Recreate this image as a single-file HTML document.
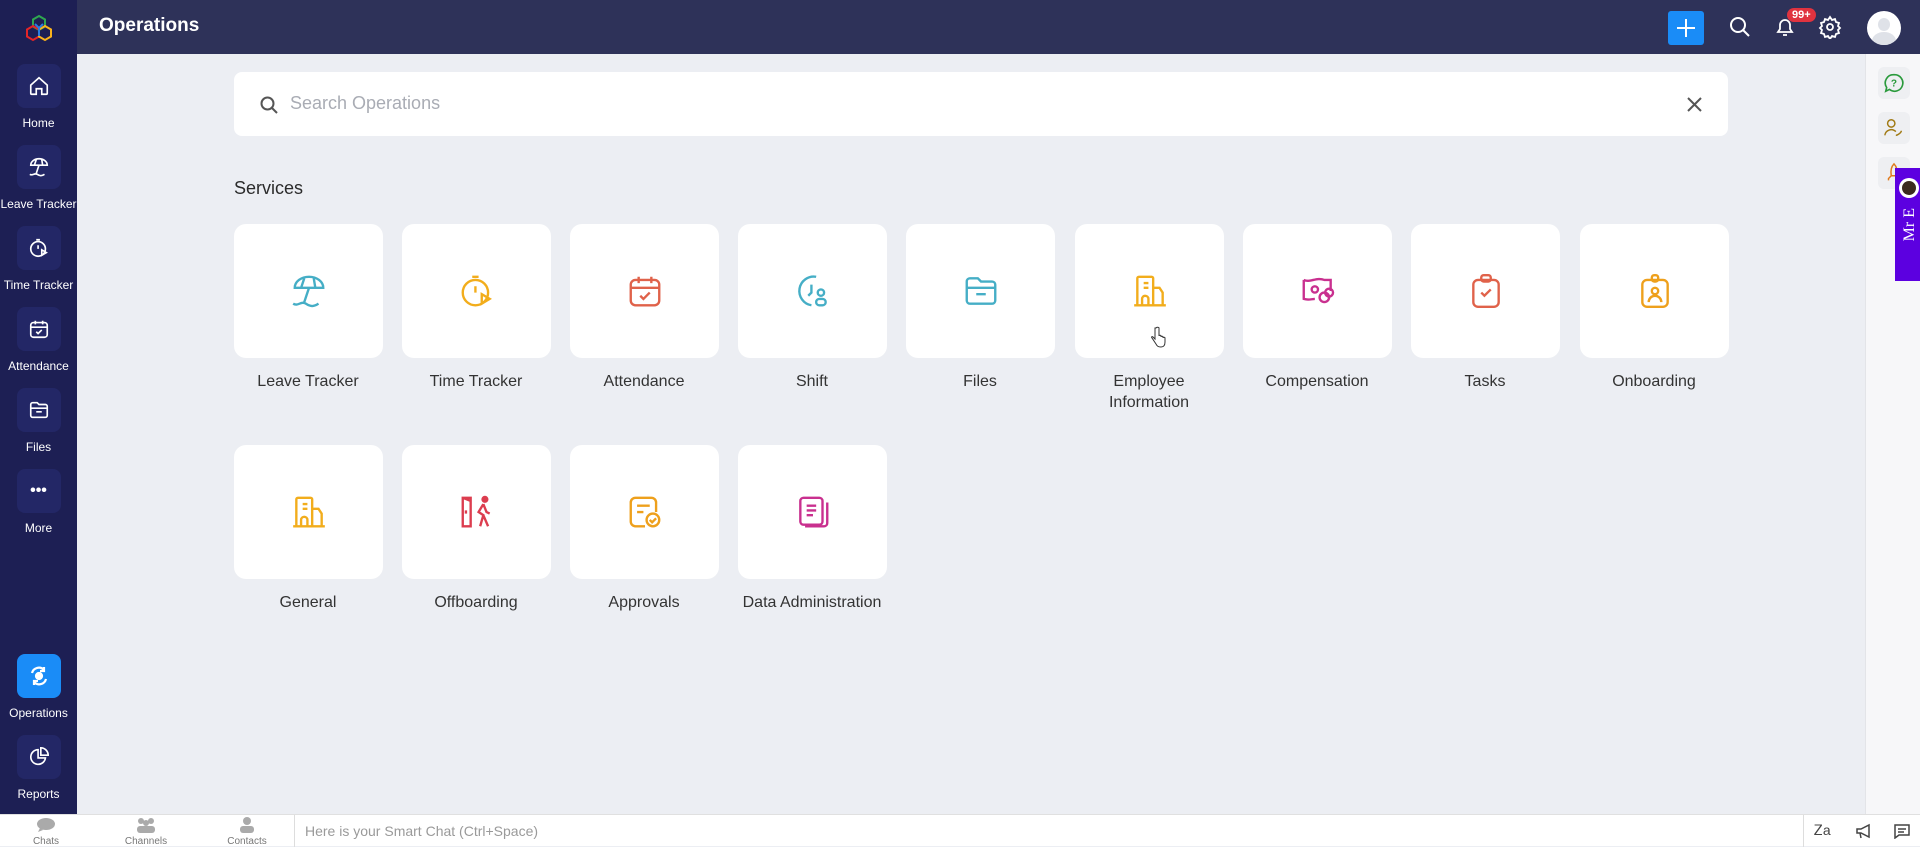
<!DOCTYPE html>
<html><head><meta charset="utf-8"><style>
*{margin:0;padding:0;box-sizing:border-box}
body{width:1920px;height:846px;overflow:hidden;background:#eceef3;font-family:"Liberation Sans",sans-serif;position:relative}
.side{position:absolute;left:0;top:0;width:77px;height:814px;background:#1d1f54}
.top{position:absolute;left:77px;top:0;right:0;height:54px;background:#2e3259}
.top h1{position:absolute;left:22px;top:15px;color:#fff;font-size:19px;font-weight:bold}
.nav{position:absolute;left:0;width:77px;text-align:center;color:#fff;font-size:12px}
.nav .b{width:44px;height:44px;margin:0 auto 8px;border-radius:8px;background:#232766;display:flex;align-items:center;justify-content:center}
.nav.act .b{background:#1a8cf7}
.search{position:absolute;left:234px;top:72px;width:1494px;height:64px;background:#fff;border-radius:8px}
.search span{position:absolute;left:56px;top:21px;font-size:18px;color:#a9acb4}
.svc{position:absolute;left:234px;top:178px;font-size:18px;color:#2b2b2b}
.card{position:absolute;width:149px;height:134px;background:#fff;border-radius:12px;display:flex;align-items:center;justify-content:center}
.lbl{position:absolute;width:168px;text-align:center;font-size:16px;color:#333;line-height:21px}
.rp{position:absolute;left:1865px;top:54px;width:55px;height:760px;background:#f7f7f9;border-left:1px solid #e3e4e8}
.rb{position:absolute;left:1878px;width:32px;height:32px;border-radius:6px;background:#eeeff2;display:flex;align-items:center;justify-content:center}
.bot{position:absolute;left:0;top:814px;width:1920px;height:32px;background:#fff;border-top:1px solid #e0e0e0}
.bi{position:absolute;top:2px;text-align:center;font-size:10px;color:#777;width:60px}
</style></head><body>
<div class="side">
 <svg style="position:absolute;left:25px;top:14px" width="28" height="28" viewBox="0 0 28 28"><path d="M14 2l6 3.5v7L14 16l-6-3.5v-7z" fill="none" stroke="#2fa84f" stroke-width="2"/><path d="M8 12l6 3.5v7L8 26l-6-3.5v-7z" fill="none" stroke="#e42527" stroke-width="2"/><path d="M20 12l6 3.5v7L20 26l-6-3.5v-7z" fill="none" stroke="#f9b21d" stroke-width="2"/><path d="M10 10l4 4 4-4M14 14v8" stroke="#2a7de1" stroke-width="2" fill="none"/></svg>
</div>
<div class="nav" style="top:64px"><div class="b"><svg width="22" height="22" viewBox="0 0 24 24" fill="none" stroke="#fff" stroke-width="1.8"><path d="M3 11l9-8 9 8v9a1 1 0 01-1 1h-5v-6h-6v6H4a1 1 0 01-1-1z"/></svg></div>Home</div>
<div class="nav" style="top:145px"><div class="b"><svg width="22" height="22" viewBox="0 0 24 24" fill="none" stroke="#fff" stroke-width="1.8"><path d="M3 10a9 7 0 0118 0zM12 10l-3 9M7 10l2-6M15 4l1 6M2 20c3 2 5-2 8 0s5 2 8 0"/></svg></div>Leave Tracker</div>
<div class="nav" style="top:226px"><div class="b"><svg width="22" height="22" viewBox="0 0 24 24" fill="none" stroke="#fff" stroke-width="1.8"><circle cx="11" cy="13" r="8"/><path d="M9 3h4M11 9v4M15 14l5 3-5 3z"/></svg></div>Time Tracker</div>
<div class="nav" style="top:307px"><div class="b"><svg width="22" height="22" viewBox="0 0 24 24" fill="none" stroke="#fff" stroke-width="1.8"><rect x="3" y="5" width="18" height="16" rx="3"/><path d="M3 10h18M8 3v4M16 3v4M9 15l2 2 4-4"/></svg></div>Attendance</div>
<div class="nav" style="top:388px"><div class="b"><svg width="22" height="22" viewBox="0 0 24 24" fill="none" stroke="#fff" stroke-width="1.8"><path d="M3 6a2 2 0 012-2h5l2 2h7a2 2 0 012 2v10a2 2 0 01-2 2H5a2 2 0 01-2-2z M3 10h18M9 14h6"/></svg></div>Files</div>
<div class="nav" style="top:469px"><div class="b" style="font-size:16px;font-weight:bold">•••</div>More</div>
<div class="nav act" style="top:654px"><div class="b"><svg width="24" height="24" viewBox="0 0 24 24" fill="none" stroke="#fff" stroke-width="2.2"><path d="M5 9a7 7 0 0112-3M19 15a7 7 0 01-12 3M17 3v4h-4M7 21v-4h4"/><circle cx="12" cy="12" r="3" fill="#fff"/></svg></div>Operations</div>
<div class="nav" style="top:735px"><div class="b"><svg width="22" height="22" viewBox="0 0 24 24" fill="none" stroke="#fff" stroke-width="1.8"><path d="M11 4a8 8 0 108 9h-8z M14 2v8h8a8 8 0 00-8-8z"/></svg></div>Reports</div>
<div class="top"><h1>Operations</h1>
 <div style="position:absolute;left:1591px;top:11px;width:36px;height:34px;background:#1a8cf7;border-radius:3px"><svg width="36" height="34"><path d="M18 8v18M9 17h18" stroke="#fff" stroke-width="2"/></svg></div>
 <svg style="position:absolute;left:1652px;top:16px" width="22" height="22" fill="none" stroke="#fff" stroke-width="2"><circle cx="9" cy="9" r="7"/><path d="M14 14l6 6"/></svg>
 <svg style="position:absolute;left:1697px;top:16px" width="22" height="22" fill="none" stroke="#fff" stroke-width="1.8"><path d="M4 16h14l-2-3V9a5 5 0 00-10 0v4zM9 19h4"/></svg>
 <div style="position:absolute;left:1710px;top:8px;background:#e0333f;color:#fff;font-size:11px;font-weight:bold;border-radius:8px;padding:1px 5px">99+</div>
 <svg style="position:absolute;left:1741px;top:15px" width="24" height="24" viewBox="0 0 24 24" fill="none" stroke="#fff" stroke-width="1.8"><circle cx="12" cy="12" r="3"/><path d="M12 2l2 3 3-1 1 3 3 1-1 3 2 2-2 2 1 3-3 1-1 3-3-1-2 3-2-3-3 1-1-3-3-1 1-3-2-2 2-2-1-3 3-1 1-3 3 1z"/></svg>
 <div style="position:absolute;left:1790px;top:11px;width:34px;height:34px;border-radius:50%;background:#fff;overflow:hidden"><div style="position:absolute;left:11px;top:7px;width:12px;height:13px;border-radius:50%;background:#dfe2e8"></div><div style="position:absolute;left:5px;top:21px;width:24px;height:18px;border-radius:50%;background:#dfe2e8"></div></div>
</div>
<div class="search"><svg style="position:absolute;left:26px;top:24px" width="18" height="18" fill="none" stroke="#555" stroke-width="2"><circle cx="7.5" cy="7.5" r="6"/><path d="M12 12l5 5"/></svg><span>Search Operations</span>
<svg style="position:absolute;left:1453px;top:25px" width="15" height="15" stroke="#555" stroke-width="2"><path d="M1 1l13 13M14 1L1 14"/></svg></div>
<div class="svc">Services</div>

<div class="card" style="left:234px;top:224px"><svg width="38" height="38" viewBox="0 0 24 24" fill="none" stroke="#45aec6" stroke-width="1.5"><path d="M3 10a9 7 0 0118 0zM12 10l-3 9M7 10l2-6M15 4l1 6M2 20c3 2 5-2 8 0s5 2 8 0"/></svg></div>
<div class="card" style="left:402px;top:224px"><svg width="38" height="38" viewBox="0 0 24 24" fill="none" stroke="#f2ad1c" stroke-width="1.5"><circle cx="11" cy="13" r="8"/><path d="M9 3h4M11 9v4M15 14l5 3-5 3z"/></svg></div>
<div class="card" style="left:570px;top:224px"><svg width="38" height="38" viewBox="0 0 24 24" fill="none" stroke="#e0624a" stroke-width="1.5"><rect x="3" y="5" width="18" height="16" rx="3"/><path d="M3 10h18M8 3v4M16 3v4M9 15l2 2 4-4"/></svg></div>
<div class="card" style="left:738px;top:224px"><svg width="38" height="38" viewBox="0 0 24 24" fill="none" stroke="#45aec6" stroke-width="1.5"><path d="M14 3a9 9 0 10-3 18M11 8v5l-2 2"/><circle cx="17" cy="13" r="2"/><rect x="14" y="17" width="6" height="4" rx="2"/></svg></div>
<div class="card" style="left:906px;top:224px"><svg width="38" height="38" viewBox="0 0 24 24" fill="none" stroke="#45aec6" stroke-width="1.5"><path d="M3 6a2 2 0 012-2h5l2 2h7a2 2 0 012 2v10a2 2 0 01-2 2H5a2 2 0 01-2-2z M3 10h18M9 14h6"/></svg></div>
<div class="card" style="left:1075px;top:224px"><svg width="38" height="38" viewBox="0 0 24 24" fill="none" stroke="#f2ad1c" stroke-width="1.5"><path d="M4 21V4a1 1 0 011-1h8a1 1 0 011 1v17M14 10h4l2 3v8M2 21h20M8 7h3M8 10h3M7 21v-4a2 2 0 014 0v4"/></svg></div>
<div class="card" style="left:1243px;top:224px"><svg width="38" height="38" viewBox="0 0 24 24" fill="none" stroke="#c9308f" stroke-width="1.5"><path d="M3 5c4 2 8-2 13 0l4 0v7M3 5v12c3 1 5 0 7 0"/><circle cx="10" cy="11" r="2"/><circle cx="16" cy="16" r="3"/><circle cx="19" cy="13" r="2.5"/></svg></div>
<div class="card" style="left:1411px;top:224px"><svg width="38" height="38" viewBox="0 0 24 24" fill="none" stroke="#e0624a" stroke-width="1.5"><rect x="4" y="5" width="16" height="17" rx="3"/><rect x="9" y="2" width="6" height="4" rx="1.5"/><path d="M9 13l2 2 4-4"/></svg></div>
<div class="card" style="left:1580px;top:224px"><svg width="38" height="38" viewBox="0 0 24 24" fill="none" stroke="#eea01c" stroke-width="1.5"><rect x="4" y="5" width="16" height="17" rx="3"/><rect x="10" y="2" width="4" height="4" rx="1.5"/><circle cx="12" cy="12" r="2"/><path d="M8 19a4 4 0 018 0"/></svg></div>

<div class="lbl" style="left:224px;top:371px">Leave Tracker</div>
<div class="lbl" style="left:392px;top:371px">Time Tracker</div>
<div class="lbl" style="left:560px;top:371px">Attendance</div>
<div class="lbl" style="left:728px;top:371px">Shift</div>
<div class="lbl" style="left:896px;top:371px">Files</div>
<div class="lbl" style="left:1065px;top:371px">Employee<br>Information</div>
<div class="lbl" style="left:1233px;top:371px">Compensation</div>
<div class="lbl" style="left:1401px;top:371px">Tasks</div>
<div class="lbl" style="left:1570px;top:371px">Onboarding</div>

<div class="card" style="left:234px;top:445px"><svg width="38" height="38" viewBox="0 0 24 24" fill="none" stroke="#f2ad1c" stroke-width="1.5"><path d="M4 21V4a1 1 0 011-1h8a1 1 0 011 1v17M14 10h4l2 3v8M2 21h20M8 7h3M8 10h3M7 21v-4a2 2 0 014 0v4"/></svg></div>
<div class="card" style="left:402px;top:445px"><svg width="38" height="38" viewBox="0 0 24 24" fill="none" stroke="#dc3d4f" stroke-width="1.5"><path d="M3 3h5v18H3zM3 3l5 2M5 11v2"/><circle cx="17" cy="4" r="1.5" fill="#dc3d4f"/><path d="M16 7l-3 5 3 2-2 7M16 7l2 5 2 1M16 14l3 7"/></svg></div>
<div class="card" style="left:570px;top:445px"><svg width="38" height="38" viewBox="0 0 24 24" fill="none" stroke="#eea01c" stroke-width="1.5"><path d="M12 21H6a3 3 0 01-3-3V6a3 3 0 013-3h10a3 3 0 013 3v6M7 8h8M7 12h4"/><circle cx="17" cy="17" r="4"/><path d="M15 17l1.5 1.5 2.5-2.5"/></svg></div>
<div class="card" style="left:738px;top:445px"><svg width="38" height="38" viewBox="0 0 24 24" fill="none" stroke="#c9308f" stroke-width="1.5"><rect x="4" y="3" width="14" height="17" rx="2"/><path d="M7 21h12a2 2 0 002-2V6M8 8h6M8 11h6M8 14h4"/></svg></div>

<div class="lbl" style="left:224px;top:592px">General</div>
<div class="lbl" style="left:392px;top:592px">Offboarding</div>
<div class="lbl" style="left:560px;top:592px">Approvals</div>
<div class="lbl" style="left:728px;top:592px">Data Administration</div>

<svg style="position:absolute;left:1150px;top:326px" width="16" height="22" viewBox="0 0 16 22" fill="#fff" stroke="#333" stroke-width="1"><path d="M5 2v11l-2-2c-1-1-2 0-1 1l4 6c1 2 2 3 5 3s4-2 4-5v-4c0-1-2-1-2 0v-1c0-1-2-1-2 0v-1c0-1-2-1-2 0V2c0-1-3-1-3 0z"/></svg>

<div class="rp"></div>
<div class="rb" style="top:67px"><svg width="22" height="22" viewBox="0 0 24 24" fill="none" stroke="#2a9a3c" stroke-width="1.8"><path d="M12 3a9 9 0 11-5 16l-4 2 1-4a9 9 0 018-14z"/><text x="12" y="16" font-size="11" font-weight="bold" fill="#2a9a3c" stroke="none" text-anchor="middle" font-family="Liberation Sans">?</text></svg></div>
<div class="rb" style="top:112px"><svg width="22" height="22" viewBox="0 0 24 24" fill="none" stroke="#a17a14" stroke-width="1.6"><circle cx="9" cy="7" r="4"/><path d="M2 20a7 7 0 0112-4M14 20c2 0 6-3 6-5"/></svg></div>
<div class="rb" style="top:157px"><svg width="22" height="22" viewBox="0 0 24 24" fill="none" stroke="#e07a1c" stroke-width="1.6"><path d="M12 2c3 3 4 7 3 13H9C8 9 9 5 12 2zM9 15l-3 3v2M15 15l3 3v2"/></svg></div>
<div style="position:absolute;left:1895px;top:168px;width:25px;height:113px;background:#5c00e0"><div style="position:absolute;left:4px;top:10px;width:20px;height:20px;border-radius:50%;background:#fff"><div style="margin:3px;width:14px;height:14px;border-radius:50%;background:#3b2a20"></div></div><div style="position:absolute;left:6px;top:40px;color:#fff;font-family:'Liberation Serif',serif;font-size:16px;writing-mode:vertical-rl;transform:rotate(180deg)">Mr E</div></div>

<div class="bot">
 <div class="bi" style="left:16px"><svg width="20" height="16"><ellipse cx="10" cy="7" rx="9" ry="6" fill="#aaa"/><path d="M4 11l-2 4 5-2" fill="#aaa"/></svg><br>Chats</div>
 <div class="bi" style="left:116px"><svg width="22" height="16"><circle cx="6" cy="4" r="3" fill="#aaa"/><circle cx="16" cy="4" r="3" fill="#aaa"/><circle cx="11" cy="6" r="3" fill="#aaa"/><rect x="2" y="9" width="18" height="7" rx="3" fill="#aaa"/></svg><br>Channels</div>
 <div class="bi" style="left:217px"><svg width="16" height="16"><circle cx="8" cy="4" r="4" fill="#aaa"/><rect x="1" y="9" width="14" height="7" rx="3" fill="#aaa"/></svg><br>Contacts</div>
 <div style="position:absolute;left:294px;top:0;height:32px;border-left:1px solid #ddd"></div>
 <div style="position:absolute;left:305px;top:8px;font-size:14px;color:#9a9a9a">Here is your Smart Chat (Ctrl+Space)</div>
 <div style="position:absolute;left:1803px;top:0;height:32px;border-left:1px solid #ddd"></div>
 <div style="position:absolute;left:1814px;top:7px;font-size:14px;color:#444">Ꮓa</div>
 <svg style="position:absolute;left:1855px;top:8px" width="18" height="16" fill="none" stroke="#444" stroke-width="1.5"><path d="M2 6h4l8-4v12l-8-4H2zM5 10l1 5"/></svg>
 <svg style="position:absolute;left:1893px;top:8px" width="18" height="16" fill="none" stroke="#444" stroke-width="1.5"><path d="M2 2h14v10H6l-4 3z M5 6h8M5 9h6"/></svg>
</div>
</body></html>
